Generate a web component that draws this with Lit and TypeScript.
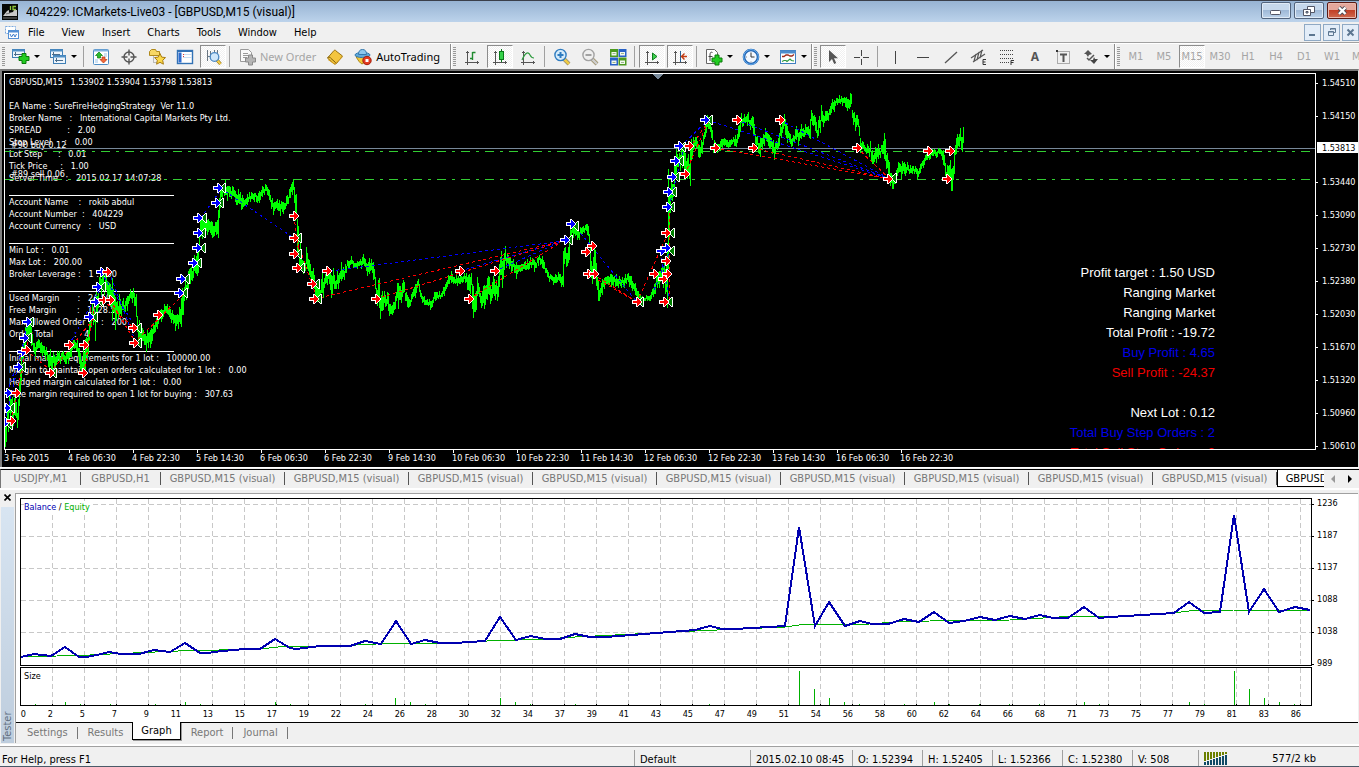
import { LitElement, html, svg, css } from "lit";
import { customElement, property } from "lit/decorators.js";

/* ---------- data ---------- */

// Turning points of the price series: bar, high, low (pixel rows, one bar per pixel).
const TURNS: number[][] = [
  [5, 424, 440], [7, 408, 428], [10, 395, 418], [13, 405, 425], [16, 395, 415], [17, 410, 428], [19, 380, 412], [20, 362, 395],
  [22, 344, 368], [24, 330, 352], [26, 322, 340], [28, 318, 334], [31, 330, 345], [34, 342, 354], [38, 340, 350], [42, 344, 354], [46, 348, 358],
  [50, 352, 370], [55, 354, 364], [60, 352, 362], [65, 353, 362], [70, 346, 355], [75, 339, 347], [78, 344, 360], [80, 350, 366],
  [82, 356, 372], [84, 345, 374], [86, 340, 362], [88, 326, 345], [90, 312, 330], [93, 306, 322], [95, 308, 336], [97, 290, 318],
  [99, 278, 296], [101, 272, 288], [104, 276, 292], [106, 268, 288], [108, 285, 300], [112, 270, 302], [115, 292, 316],
  [118, 300, 316], [122, 300, 314], [125, 302, 312], [128, 292, 302], [131, 291, 298], [133, 286, 302], [136, 298, 314],
  [138, 326, 346], [140, 328, 348], [145, 334, 346], [150, 330, 345], [155, 322, 334], [160, 310, 320], [165, 304, 312],
  [168, 306, 316], [172, 312, 324], [176, 314, 326], [180, 310, 324], [182, 288, 312], [185, 278, 300], [188, 273, 290],
  [191, 268, 285], [195, 260, 276], [197, 248, 268], [199, 232, 258], [201, 212, 240], [204, 214, 230], [208, 220, 233],
  [212, 222, 238], [216, 222, 236], [218, 212, 230], [219, 190, 215], [222, 184, 195], [226, 186, 198], [230, 186, 198],
  [235, 189, 200], [238, 192, 206], [242, 197, 207], [246, 196, 204], [250, 192, 200], [255, 192, 198], [258, 194, 202],
  [262, 189, 196], [265, 185, 192], [268, 188, 196], [270, 194, 202], [273, 200, 213], [276, 202, 212], [280, 202, 214],
  [284, 202, 210], [287, 196, 206], [290, 187, 198], [292, 178, 194], [294, 184, 200], [296, 190, 222], [298, 232, 268],
  [301, 254, 270], [304, 262, 271], [306, 250, 268], [310, 260, 275], [313, 272, 286], [316, 282, 298], [319, 288, 306],
  [322, 278, 292], [325, 273, 287], [328, 268, 280], [331, 272, 294], [335, 277, 288], [338, 270, 283], [343, 268, 282],
  [347, 260, 268], [351, 258, 265], [355, 263, 269], [360, 260, 266], [363, 256, 266], [367, 263, 272], [371, 256, 270],
  [374, 266, 277], [376, 278, 300], [380, 290, 312], [383, 290, 308], [387, 292, 304], [390, 302, 316], [393, 300, 312],
  [396, 290, 302], [398, 280, 298], [401, 284, 300], [403, 276, 290], [406, 296, 304], [410, 300, 307], [413, 286, 296],
  [418, 279, 288], [422, 296, 302], [427, 298, 304], [431, 301, 307], [434, 292, 300], [438, 292, 298], [441, 293, 298],
  [445, 284, 293], [450, 272, 280], [455, 277, 283], [460, 276, 283], [465, 273, 281], [468, 274, 290], [471, 274, 292],
  [473, 282, 316], [475, 288, 312], [478, 278, 295], [481, 296, 308], [484, 282, 300], [488, 280, 299], [492, 281, 298],
  [497, 280, 300], [499, 258, 286], [503, 252, 272], [505, 248, 264], [508, 257, 270], [511, 257, 268], [515, 262, 273],
  [520, 265, 272], [525, 264, 270], [530, 258, 266], [535, 262, 268], [539, 254, 262], [541, 256, 264], [545, 265, 271],
  [549, 274, 280], [554, 277, 282], [559, 273, 280], [562, 278, 286], [563, 242, 270], [566, 250, 265], [569, 240, 258],
  [571, 222, 240], [574, 224, 236], [578, 228, 240], [582, 225, 232], [586, 225, 232], [588, 226, 240], [590, 248, 266],
  [592, 262, 280], [594, 246, 274], [597, 270, 292], [599, 285, 299], [603, 279, 290], [608, 274, 282], [612, 273, 284],
  [618, 278, 288], [622, 276, 286], [627, 274, 282], [631, 277, 285], [635, 284, 292], [638, 292, 299], [641, 294, 300],
  [645, 296, 300], [650, 295, 300], [654, 284, 294], [657, 272, 286], [660, 272, 284], [663, 262, 284], [665, 258, 282],
  [667, 232, 306], [668, 180, 302], [669, 192, 240], [670, 186, 212], [672, 178, 200], [674, 168, 192], [676, 152, 180],
  [678, 148, 166], [680, 144, 168], [683, 146, 168], [686, 156, 174], [688, 162, 182], [690, 144, 176], [693, 138, 150],
  [697, 137, 148], [699, 144, 160], [702, 138, 150], [704, 128, 140], [707, 116, 128], [711, 124, 136], [713, 140, 150],
  [717, 144, 150], [722, 139, 147], [727, 141, 147], [732, 138, 144], [737, 136, 144], [739, 120, 138], [741, 115, 126],
  [747, 114, 122], [752, 120, 130], [755, 126, 142], [758, 138, 152], [761, 138, 150], [765, 130, 142], [769, 134, 146],
  [773, 142, 156], [776, 140, 152], [779, 130, 142], [783, 113, 128], [785, 118, 134], [788, 132, 142], [792, 138, 145],
  [796, 126, 136], [799, 132, 142], [803, 128, 140], [808, 124, 133], [810, 128, 142], [811, 110, 122], [814, 114, 126],
  [817, 126, 137], [821, 112, 126], [825, 113, 122], [830, 108, 116], [832, 98, 108], [837, 97, 103], [843, 98, 103],
  [848, 94, 110], [851, 93, 106], [853, 112, 128], [858, 119, 127], [860, 138, 148], [865, 146, 152], [870, 146, 156],
  [873, 152, 162], [877, 145, 156], [880, 147, 156], [884, 142, 156], [886, 150, 166], [888, 158, 176], [890, 168, 182],
  [893, 176, 187], [896, 170, 178], [899, 165, 173], [904, 162, 171], [909, 165, 172], [914, 166, 172], [918, 168, 176],
  [922, 160, 168], [926, 154, 161], [930, 149, 156], [936, 150, 156], [940, 147, 153], [943, 148, 160], [946, 166, 180],
  [949, 164, 180], [952, 168, 193], [954, 154, 172], [955, 140, 156], [957, 132, 146], [960, 130, 145], [964, 136, 152],
];

function barsPath(turns: number[][]): string {
  let seed = 7;
  const rnd = () => {
    seed = (seed * 1103515245 + 12345) % 2147483648;
    return seed / 2147483648;
  };
  let d = "";
  for (let i = 0; i < turns.length - 1; i++) {
    const [x0, h0, l0] = turns[i];
    const [x1, h1, l1] = turns[i + 1];
    for (let x = x0; x < x1; x++) {
      const t = (x - x0) / (x1 - x0);
      const hi = h0 + (h1 - h0) * t;
      const lo = l0 + (l1 - l0) * t;
      const range = lo - hi;
      const shift = (rnd() - 0.5) * range * 0.6;
      const shrink = rnd() * range * 0.25;
      const up = rnd() > 0.9 ? range * 0.4 : 0;
      const down = rnd() > 0.9 ? range * 0.4 : 0;
      d += `M${x + 0.5} ${Math.round(hi + shift + shrink - up)}V${Math.round(lo + shift - shrink + down + 1)}`;
    }
  }
  return d;
}

const BUYS = [
  [27, 322], [24, 338], [22, 352], [18, 367], [7, 393], [6, 408], [5, 422], [101, 272], [97, 287], [95, 302], [89, 317],
  [181, 279], [179, 293], [218, 188], [216, 203], [198, 218], [198, 233], [197, 248], [193, 263], [571, 224], [565, 240],
  [661, 251], [666, 248], [668, 192], [667, 207], [672, 177], [675, 161], [679, 146], [705, 120],
];
const SELLS = [
  [26, 350], [16, 393], [11, 421], [50, 373], [69, 345], [84, 345], [83, 373], [107, 272], [103, 300], [110, 300], [133, 328],
  [134, 343], [158, 315], [294, 216], [294, 238], [294, 254], [297, 268], [312, 284], [314, 299], [327, 271], [376, 299],
  [460, 271], [469, 299], [495, 271], [586, 252], [592, 246], [588, 274], [594, 274], [637, 302], [654, 274], [663, 279],
  [666, 261], [667, 274], [664, 302], [666, 233], [689, 146], [685, 174], [715, 148], [737, 120], [753, 148], [780, 120],
  [857, 148], [888, 179], [928, 151], [950, 151], [947, 179],
];
const EXITS = [
  [31, 322], [29, 338], [23, 367], [12, 408], [10, 425], [54, 373], [95, 317], [101, 302], [103, 287], [139, 328], [139, 343],
  [187, 279], [185, 293], [223, 188], [221, 203], [204, 218], [203, 233], [203, 248], [199, 263], [299, 238], [299, 254],
  [302, 268], [317, 284], [319, 299], [570, 240], [576, 226], [641, 302], [670, 302], [672, 251], [672, 233], [672, 207],
  [674, 192], [677, 177], [681, 161], [683, 147], [710, 120], [894, 178],
];
const BUY_LINKS = [
  [330, 271, 563, 241], [460, 271, 563, 241], [495, 271, 563, 241], [573, 224, 637, 302], [220, 188, 294, 238], [201, 218, 222, 188],
  [101, 272, 136, 328], [109, 272, 136, 343], [707, 120, 890, 179], [737, 120, 890, 179], [780, 120, 890, 179], [681, 146, 708, 120],
  [669, 207, 684, 147], [654, 290, 670, 251], [660, 252, 670, 302], [5, 422, 28, 322], [7, 393, 26, 338], [69, 345, 101, 287],
];
const SELL_LINKS = [
  [314, 299, 563, 241], [376, 299, 563, 241], [469, 299, 563, 241], [593, 274, 637, 302], [588, 274, 637, 302], [637, 302, 668, 233],
  [715, 148, 890, 179], [753, 148, 890, 179], [857, 148, 890, 179], [685, 174, 708, 122], [690, 148, 708, 122], [294, 216, 299, 254],
  [296, 238, 317, 299], [110, 300, 136, 343], [103, 300, 134, 328], [134, 343, 185, 293], [26, 350, 54, 373], [50, 373, 95, 317],
  [11, 421, 28, 340], [84, 373, 95, 302], [669, 207, 669, 302],
];

const PRICES = ["1.54510", "1.54150", "", "1.53440", "1.53090", "1.52730", "1.52380", "1.52030", "1.51670", "1.51320", "1.50960", "1.50610"];
const TIMES = [
  "3 Feb 2015", "4 Feb 06:30", "4 Feb 22:30", "5 Feb 14:30", "6 Feb 06:30", "6 Feb 22:30", "9 Feb 14:30", "10 Feb 06:30",
  "10 Feb 22:30", "11 Feb 14:30", "12 Feb 06:30", "12 Feb 22:30", "13 Feb 14:30", "16 Feb 06:30", "16 Feb 22:30",
];
const RULE = "---";
const COMMENT = [
  "EA Name : SureFireHedgingStrategy  Ver 11.0",
  "Broker Name   :   International Capital Markets Pty Ltd.",
  "SPREAD          :   2.00",
  "Stop Level     :   0.00",
  "Lot Step      :   0.01",
  "Tick Price     :   1.00",
  "Server Time   :   2015.02.17 14:07:28",
  RULE,
  "Account Name    :   rokib abdul",
  "Account Number  :   404229",
  "Account Currency   :   USD",
  RULE,
  "Min Lot :   0.01",
  "Max Lot :   200.00",
  "Broker Leverage :   1 : 500",
  RULE,
  "Used Margin       :   24.59",
  "Free Margin        :   1028.58",
  "Max Allowed Order      :   200",
  "Order Total        :   4",
  RULE,
  "Initial margin requirements for 1 lot :   100000.00",
  "Margin to maintain open orders calculated for 1 lot :   0.00",
  "Hedged margin calculated for 1 lot :   0.00",
  "Free margin required to open 1 lot for buying :   307.63",
];
const STATS: [string, string][] = [
  ["Profit target : 1.50 USD", ""], ["Ranging Market", ""], ["Ranging Market", ""], ["Total Profit : -19.72", ""],
  ["Buy Profit : 4.65", "buy"], ["Sell Profit : -24.37", "sell"], ["", ""], ["Next Lot : 0.12", ""],
  ["Total Buy Step Orders : 2", "buy"], ["Total Sell Step Orders : 2", "sell"],
];

const BALANCE =
  "21,657 34,654 51,656 65,647 79,657 86,657 97,655 109,652 121,654 139,654 154,650 170,652 185,643 200,653 207,653 222,651 245,649 260,649 275,639 290,648 296,649 320,646 350,646 365,641 381,644 396,621 411,644 425,640 440,643 455,643 485,641 500,617 516,640 531,636 545,639 560,639 575,634 590,637 606,637 695,630 710,626 722,629 735,629 785,626 799,527 815,626 829,602 845,626 860,621 872,624 888,624 904,619 919,622 934,612 949,623 964,621 980,617 995,620 1010,616 1025,619 1040,615 1053,618 1068,618 1084,607 1099,618 1110,617 1174,613 1189,602 1204,613 1220,612 1234,515 1249,612 1264,589 1279,612 1295,607 1310,610";
const EQUITY =
  "21,657 57,656 90,655 110,654 178,651 260,649 278,647 357,645 396,643 455,643 487,641 545,639 575,637 695,631 785,627 799,625 870,624 895,622 930,621 1010,620 1076,616 1099,617 1174,613 1189,611 1234,610 1310,610";
const SIZES = [
  [35, 1], [65, 3], [80, 1], [110, 1], [155, 1], [185, 3], [200, 1], [275, 3], [290, 1], [365, 1], [395, 7], [410, 3], [425, 1],
  [500, 7], [515, 3], [530, 1], [575, 1], [709, 1], [799, 34], [814, 16], [829, 7], [844, 3], [859, 1], [904, 1], [934, 3], [949, 1],
  [979, 1], [1009, 1], [1039, 1], [1084, 3], [1099, 1], [1189, 3], [1204, 1], [1234, 34], [1249, 16], [1264, 7], [1279, 3], [1294, 1],
];
const TRADE_NUMBERS = [
  2, 5, 7, 9, 11, 13, 15, 17, 19, 22, 24, 26, 28, 30, 32, 34, 37, 39, 41, 43, 45, 47, 49, 51, 54, 56, 58, 60, 62, 64, 66, 68, 71,
  73, 75, 77, 79, 81, 83, 86,
];

/* ---------- icons ---------- */

const AXES = svg`<path d="M4.5 3v14M2 14.5h14M3 4.5h3M14.5 13v3" stroke="#555" fill="none"/>`;
const PLUS = (x: number, y: number, fill = "#22cc22", edge = "#0a7a0a") => svg`
  <path d="M${x + 3} ${y}h4v3h3v4h-3v3h-4v-3h-3v-4h3z" fill=${fill} stroke=${edge}/>`;
const WINDOW = (x: number, y: number) => svg`
  <rect x=${x + 0.5} y=${y + 0.5} width="12" height="8" fill="#eef5fc" stroke="#3f7fb5"/>
  <path d="M${x} ${y + 1.5}h13" stroke="#4f8fc5" stroke-width="2"/>
  <path d="M${x + 3.5} ${y + 3}v4M${x + 2} ${y + 5.5}h8" stroke="#4a6d8c" fill="none"/>`;
const LENS = (ring: string, glass: string, handle: string, sign: string) => svg`
  <path d="M11 11l5 5" stroke="#6d5a20" stroke-width="4" opacity=".6"/>
  <path d="M11 11l5 5" stroke=${handle} stroke-width="2.4"/>
  <circle cx="7.5" cy="7" r="5.6" fill=${glass} stroke=${ring} stroke-width="1.4"/>
  <path d=${sign} stroke=${ring} stroke-width="2"/>`;

const ICONS: Record<string, unknown> = {
  logo: svg`<rect width="16" height="16" fill="#060806"/><path d="M1 12l4-5 2-1 0 3 4-1 1-2 3 0v6z" fill="#c9c9c9"/><path d="M4 10l4-1M1 14h14" stroke="#777"/><path d="M8.500 2v4M14 2.500h-3v3h3" stroke="#8fc63a" fill="none" stroke-width="1.300"/>`,
  mdi: svg`<rect x="1.500" y="2.500" width="10" height="7" fill="#fff" stroke="#7ba9de" stroke-dasharray="2 1"/><rect x="4.500" y="6.500" width="10" height="8" fill="#fff" stroke="#5590d4"/><path d="M4 7.500h11" stroke="#5590d4" stroke-width="2"/><path d="M6 10l1.500 3 2-3 1.500 3 1.500-3" stroke="#3c7ccc" fill="none"/>`,
  newchart: svg`${WINDOW(0, 1)}${PLUS(7, 5.5)}`,
  profiles: svg`${WINDOW(1, 1)}${WINDOW(4, 7)}`,
  market: svg`<rect x="1.500" y="1.500" width="15" height="15" rx="1" fill="#fff" stroke="#4d8cc4"/><path d="M2 2.500h14" stroke="#7fb0de" stroke-width="2"/><path d="M12 6h3M12 8h3M3 12h3M3 14h3" stroke="#9cc3e6"/><path d="M7 4l3.500 3.500H8.500V10h-3V7.500H3.500z" fill="#2dbb2d" stroke="#0b7d0b" stroke-width=".7"/><path d="M11.500 15L8 11.500h2V9h3v2.500h2z" fill="#f26b3a" stroke="#b83212" stroke-width=".7"/>`,
  crosshair: svg`<circle cx="9" cy="9" r="5" fill="none" stroke="#555" stroke-width="1.400"/><path d="M9 1.500v6M9 10.500v6M1.500 9h6M10.500 9h6" stroke="#555" stroke-width="1.400"/>`,
  navigator: svg`<path d="M1.500 3.500l2-2h4l1 2h3v4h-10z" fill="#f7d765" stroke="#b08a1c"/><path d="M5.500 8.500v6h3" stroke="#888" stroke-dasharray="1 1" fill="none"/><path d="M12 5.500l1.700 3.600 3.800.5-2.800 2.700.7 3.900-3.400-1.900-3.400 1.900.7-3.900-2.800-2.700 3.800-.5z" fill="#fbd84a" stroke="#a87c12"/>`,
  terminal: svg`<rect x="1.500" y="2.500" width="15" height="13" fill="#fff" stroke="#3272b5" stroke-width="1.400"/><path d="M2 3.500h14" stroke="#3272b5"/><rect x="2.500" y="4.500" width="3" height="10" fill="#2e6dd0"/><path d="M7 6.500h9M7 9.500h9" stroke="#c8ddf2"/><path d="M7 6.500h1M7 8.500h1" stroke="#d33"/>`,
  tester: svg`<path d="M3.500 2v11M6.500 3v8M10.500 2v4M13.500 2v5M3 8.500h5" stroke="#6b7782"/><path d="M13 12l3.500 4" stroke="#8a6a10" stroke-width="3.400"/><path d="M13 12l3.500 4" stroke="#f5cf4a" stroke-width="2"/><circle cx="10.500" cy="9" r="4.300" fill="#cfe6fa" stroke="#4b88c4" stroke-width="1.300"/>`,
  neworder: svg`<path d="M2.500 1.500h8l3 3v9h-11z" fill="#fafafa" stroke="#9a9a9a"/><path d="M5 5.500h5M5 7.500h6M5 9.500h4" stroke="#9a9a9a"/>${PLUS(7.5, 7, "#b5b5b5", "#8a8a8a")}`,
  editor: svg`<path d="M1.500 10L8 2.500c1-.8 2 0 2 .5l6.500 5-6 7.500c-1 .9-2 .6-3 0z" fill="#f3c540" stroke="#9a7413"/><path d="M1.500 10c1-1.500 2.500-1 3 0l5.500 5" fill="none" stroke="#7a5a0c"/><path d="M2 11.500l6.500 4.500 8-7" fill="none" stroke="#d7a021"/>`,
  auto: svg`<path d="M2 8.500c2 4 4 6.500 6 7.500 3-1.500 5-4 6-7.500z" fill="#f2c838" stroke="#a98517"/><ellipse cx="8.500" cy="7" rx="7.500" ry="2.600" fill="#5fa9da" stroke="#3478ad"/><path d="M4.500 6.500C4.500 3 6 1.500 8.500 1.500S12.500 3 12.500 6.500z" fill="#8cc6ec" stroke="#3478ad"/><circle cx="13" cy="12.500" r="4.200" fill="#e23a20" stroke="#a3200c"/><rect x="11.500" y="11" width="3" height="3" fill="#fff"/>`,
  bars: svg`${AXES}<path d="M9.500 4v8M9.500 4.500h3M7 10.500h2.500" stroke="#1f8a2f" stroke-width="1.400" fill="none"/>`,
  candles: svg`${AXES}<path d="M10.500 1v13" stroke="#0a7a1a"/><rect x="8.500" y="3.500" width="4" height="8" fill="#35d24a" stroke="#0a7a1a"/>`,
  line: svg`${AXES}<path d="M3 12c3-7 6-9 8-5 1 2 3 3 4 3" stroke="#2f9b3f" fill="none" stroke-width="1.200"/>`,
  zoomin: LENS("#2f7cc0", "#d5ebfa", "#f2cd42", "M4.500 7h6M7.500 4v6"),
  zoomout: LENS("#a2a2a2", "#efefef", "#cfcfcf", "M4.500 7h6"),
  tile: svg`<rect x="1" y="1" width="8" height="8" fill="#4c9a20"/><rect x="9.500" y="1" width="8" height="8" fill="#2862c6"/><rect x="1" y="9.500" width="8" height="8" fill="#2862c6"/><rect x="9.500" y="9.500" width="8" height="8" fill="#4c9a20"/><path d="M2.500 4h5v3.500h-5zM11 4h5v3.500h-5zM2.500 12.500h5V16h-5zM11 12.500h5V16h-5z" fill="#f3f8ef"/><path d="M3.500 5.500h3M12 5.500h3M3.500 14.500h3M12 14.500h3" stroke="#9bb88c"/>`,
  scroll: svg`${AXES}<path d="M9.500 5l4.500 3.500L9.500 12z" fill="#3fd04f" stroke="#0b7d1b"/>`,
  shift: svg`${AXES}<path d="M9.500 3v11" stroke="#2a5f93"/><path d="M16 8.500h-5M13.500 5.500l-3 3 3 3" stroke="#c23b12" stroke-width="1.400" fill="none"/>`,
  indicators: svg`<path d="M1.500 1.500h8l3 3v11h-11z" fill="#fff" stroke="#666"/><path d="M7.500 4.500C5.500 3.500 5 5 5 7v6M3.500 8.500h4" stroke="#444" fill="none"/>${PLUS(7, 7)}`,
  clock: svg`<circle cx="9" cy="9" r="7" fill="#f2f8ff" stroke="#1d62b2" stroke-width="2.600"/><circle cx="9" cy="9" r="7.400" fill="none" stroke="#6db1ef"/><path d="M9 4.500V9h3.500" stroke="#333" fill="none"/><path d="M9 13.500v1M4 9h1" stroke="#888"/>`,
  template: svg`<rect x="1.500" y="2.500" width="15" height="13" fill="#fff" stroke="#3f7fc0"/><path d="M1 4h16" stroke="#4c8ccc" stroke-width="3"/><path d="M3 8.500h2l2-1.500h2l2 1h2l2-1.500" stroke="#a02a1a" fill="none" stroke-width="1.300"/><path d="M3 13.500l2-1h2l1 1 3-2.500 1.500 1.500 2.500.5" stroke="#2f9b3f" fill="none" stroke-width="1.200"/>`,
  cursor: svg`<path d="M5 2v12l3-3 2.200 5 2-1-2.200-4.700h4z" fill="#555"/>`,
  cross: svg`<path d="M9.500 2v6M9.500 11v6M2 9.500h6M11 9.500h6" stroke="#444"/>`,
  vline: svg`<path d="M9.500 3v13" stroke="#444"/>`,
  hline: svg`<path d="M3 9.500h12" stroke="#444"/>`,
  trend: svg`<path d="M3 15L15 4" stroke="#555" stroke-width="1.300"/>`,
  channel: svg`<path d="M1 10L13 2M3 14l12-8M6 6l-2 7M9 4L7 12M12 2l-2 8" stroke="#555" fill="none" stroke-width="1.200"/><path d="M16 11.500h-3v5h3M13 14h2.500" stroke="#333" fill="none"/>`,
  fibo: svg`<path d="M2 2.500h13M2 6.500h13M2 10.500h13M2 14.500h9" stroke="#444" stroke-dasharray="1 1"/><path d="M16 12.500h-3V17M13 14.500h2.500" stroke="#333" fill="none"/>`,
  label: svg`<rect x="3.500" y="3.500" width="12" height="12" fill="none" stroke="#666" stroke-dasharray="1 1"/><path d="M6 6.500h7M9.500 6.500V14" stroke="#555" stroke-width="2"/><rect x="2" y="2" width="2" height="2" fill="#333"/>`,
  arrows: svg`<path d="M6 2l4 4-3 1-1 2-2-3-2 0z" fill="#555"/><path d="M5 10l2 2 5-5" stroke="#555" stroke-width="1.500" fill="none"/><path d="M12 9l1 2 3 0-4 5-4-4h3z" fill="#444"/>`,
};

@customElement("mt-icon")
class MtIcon extends LitElement {
  @property() name = "";
  static styles = css`
    :host { display: inline-flex; flex: none; }
    svg { display: block; width: 18px; height: 18px; }
    .small { width: 16px; height: 16px; }
  `;
  render() {
    const small = this.name === "logo" || this.name === "mdi";
    return html`<svg class=${small ? "small" : ""} viewBox=${small ? "0 0 16 16" : "0 0 18 18"} aria-hidden="true">${ICONS[this.name]}</svg>`;
  }
}

/* ---------- title bar and menu ---------- */

@customElement("mt-header")
class MtHeader extends LitElement {
  static styles = css`
    :host { display: block; color: #000; }
    button { font: inherit; color: inherit; padding: 0; margin: 0; border: 0; background: none; }
    .title {
      display: flex; align-items: center; height: 21px; border-top: 1px solid #3a3f4a; padding: 0 2px;
      background: linear-gradient(#97b3d3, #bcd3eb); font: 12px Roboto, "Open Sans", sans-serif;
    }
    .title h1 { flex: 1; margin: 0 0 0 8px; font: inherit; white-space: nowrap; overflow: hidden; }
    .win { display: flex; gap: 3px; align-self: flex-start; padding-top: 1px; }
    .win button {
      width: 30px; height: 17px; border: 1px solid #52647d; border-radius: 2px; display: grid; place-items: center;
      background: linear-gradient(#c6d8ec 45%, #9fb9d7 50%, #bcd2ea); box-shadow: inset 0 0 0 1px #dfeaf6;
    }
    .win .close { border-color: #5a1a14; background: linear-gradient(#e5a79c 45%, #c23f26 50%, #cf6a50); box-shadow: inset 0 0 0 1px #eab9ae; }
    .menu {
      display: flex; align-items: center; height: 20px; padding-left: 4px; background: #f0f0f0;
      font: 11px "DejaVu Sans Condensed", "DejaVu Sans", sans-serif;
    }
    nav { display: flex; flex: 1; gap: 17px; margin-left: 8px; }
    .child { display: flex; gap: 2px; }
    .child button { width: 17px; height: 17px; border: 1px solid #8fa9c4; background: #e3edf8; display: grid; place-items: center; }
    svg { display: block; }
  `;
  render() {
    return html`
      <div class="title">
        <mt-icon name="logo"></mt-icon>
        <h1>404229: ICMarkets-Live03 - [GBPUSD,M15 (visual)]</h1>
        <div class="win">
          <button aria-label="Minimize"><svg width="12" height="12"><rect x=".5" y="5.500" width="10" height="4" rx="1" fill="#fff" stroke="#535666"/></svg></button>
          <button aria-label="Restore"><svg width="14" height="12"><path d="M5.500 1.500h7v6h-7z" fill="#fff" stroke="#535666"/><path d="M1.500 4.500h7v6h-7z" fill="#fff" stroke="#535666"/><path d="M4 6.500h2v1.500h-2z" fill="#9fb9d7" stroke="#535666"/></svg></button>
          <button class="close" aria-label="Close"><svg width="13" height="11"><path d="M3 2.500l6.500 6.500M9.500 2.500L3 9" stroke="#4a4a55" stroke-width="4"/><path d="M3 2.500l6.500 6.500M9.500 2.500L3 9" stroke="#fff" stroke-width="2.400"/></svg></button>
        </div>
      </div>
      <div class="menu">
        <mt-icon name="mdi"></mt-icon>
        <nav aria-label="Main menu">
          ${["File", "View", "Insert", "Charts", "Tools", "Window", "Help"].map((m) => html`<button>${m}</button>`)}
        </nav>
        <div class="child">
          <button aria-label="Minimize chart"><svg width="9" height="9"><path d="M1 7h6" stroke="#5c7690" stroke-width="2"/></svg></button>
          <button aria-label="Restore chart"><svg width="10" height="10"><path d="M3.500 3V1.500h5v4H7M3.500 2h5" fill="none" stroke="#5c7690"/><path d="M1.500 4.500h5v4h-5zM1.500 5h5" fill="none" stroke="#5c7690"/></svg></button>
          <button aria-label="Close chart"><svg width="9" height="9"><path d="M1.500 1.500l6 6M7.500 1.500l-6 6" stroke="#5c7690" stroke-width="2"/></svg></button>
        </div>
      </div>`;
  }
}

/* ---------- toolbar ---------- */

type Tool = { icon?: string; text?: string; label: string; drop?: boolean; on?: boolean; off?: boolean } | null;
const t = (icon: string, label: string, more: object = {}): Tool => ({ icon, label, ...more });
const frame = (text: string, on = false): Tool => ({ text, label: text, on, off: true });
const GROUPS: Tool[][] = [
  [
    t("newchart", "New chart", { drop: true }), t("profiles", "Profiles", { drop: true }), null, t("market", "Market Watch"),
    t("crosshair", "Data Window"), t("navigator", "Navigator"), t("terminal", "Terminal"), t("tester", "Strategy Tester", { on: true }), null,
    t("neworder", "New Order", { text: "New Order", off: true }), t("editor", "MetaEditor"), t("auto", "AutoTrading", { text: "AutoTrading" }),
  ],
  [
    t("bars", "Bar chart"), t("candles", "Candlesticks", { on: true }), t("line", "Line chart"), null, t("zoomin", "Zoom in"),
    t("zoomout", "Zoom out"), t("tile", "Tile windows"), null, t("scroll", "Auto scroll", { on: true }), t("shift", "Chart shift", { on: true }),
    null, t("indicators", "Indicators", { drop: true }), t("clock", "Periods", { drop: true }), t("template", "Templates", { drop: true }),
  ],
  [
    t("cursor", "Cursor", { on: true }), t("cross", "Crosshair"), null, t("vline", "Vertical line"), t("hline", "Horizontal line"),
    t("trend", "Trendline"), t("channel", "Equidistant channel"), t("fibo", "Fibonacci retracement"), { text: "A", label: "Text" },
    t("label", "Text label"), t("arrows", "Arrows", { drop: true }),
  ],
  [frame("M1"), frame("M5"), frame("M15", true), frame("M30"), frame("H1"), frame("H4"), frame("D1"), frame("W1"), frame("MN")],
];

@customElement("mt-toolbar")
class MtToolbar extends LitElement {
  static styles = css`
    :host {
      display: flex; height: 25px; border-top: 1px solid #a0a0a0; box-shadow: inset 0 1px #fff; padding-top: 1px; overflow: hidden;
      background: #f0f0f0; font: 11px "Noto Sans", "Open Sans", sans-serif;
    }
    .group { display: flex; flex: none; align-items: center; border-right: 1px solid #8c8c8c; box-shadow: 1px 0 #fff; }
    .group:first-child { min-width: 450px; }
    .group:last-child { font: 11px "DejaVu Sans Condensed", "DejaVu Sans", sans-serif; }
    .grip { width: 3px; height: 19px; margin: 0 2px; background: repeating-linear-gradient(#999 0 1px, #f0f0f0 1px 2px); }
    .sep { width: 1px; height: 21px; margin: 0 3px 0 2px; background: #a0a0a0; }
    button {
      display: flex; flex: none; align-items: center; justify-content: center; width: 26px; height: 23px; margin: 0 1px; padding: 0;
      border: 1px solid transparent; background: none; color: #000; font: inherit; white-space: nowrap;
    }
    .text { width: auto; gap: 4px; padding: 0 3px; }
    .drop { width: 35px; gap: 4px; }
    .on {
      border-color: #8c8c8c #fff #fff #8c8c8c;
      background: repeating-conic-gradient(#fff 0 25%, #f0f0f0 0 50%) 0 0 / 2px 2px;
    }
    .off { color: #a5a5a5; }
    .letter { font-weight: 700; color: #555; font-size: 12px; }
    .caret { border: 3px solid transparent; border-top-color: #000; border-bottom: 0; }
  `;
  private tool(x: Tool) {
    if (!x) return html`<span class="sep"></span>`;
    const cls = [x.icon && x.text ? "text" : "", x.drop ? "drop" : "", x.on ? "on" : "", x.off ? "off" : "", x.text === "A" ? "letter" : ""].join(" ");
    return html`<button class=${cls} aria-label=${x.label}>${x.icon ? html`<mt-icon name=${x.icon}></mt-icon>` : ""}${x.text ?? ""}${
      x.drop ? html`<span class="caret"></span>` : ""}</button>`;
  }
  render() {
    return GROUPS.map((g) => html`<div class="group"><span class="grip"></span>${g.map((x) => this.tool(x))}</div>`);
  }
}

/* ---------- price chart ---------- */

const link = (l: number[], color: string) =>
  svg`<path d="M${l[0]} ${l[1]}L${l[2]} ${l[3]}" stroke=${color} stroke-dasharray="3 3" fill="none"/>`;
const entry = (p: number[], color: string) =>
  svg`<path transform="translate(${p[0]} ${p[1]})" d="M-4.500-1.500H-.5V-4.500H.5L4.500-.5V.5L.5 4.500H-.5V1.500H-4.500Z" fill=${color} stroke="#fff"/>`;

@customElement("mt-chart")
class MtChart extends LitElement {
  static styles = css`
    :host {
      display: grid; grid-template: 1fr 17px / 1fr 42px; background: #000; color: #fff; padding: 2px 0 0 2px; overflow: hidden;
      border-style: solid; border-width: 2px 1px 0 2px; border-color: #777 #e3e3e3 #777 #808080; box-sizing: border-box;
      font: 9px/12px "DejaVu Sans Condensed", "DejaVu Sans", sans-serif;
    }
    .plot { position: relative; border: 1px solid #fff; overflow: hidden; min-width: 0; }
    .plot svg { position: absolute; inset: 0; width: 100%; height: 100%; }
    .info { padding: 2px 4px; }
    .info h2 { margin: 0 0 12px; font: inherit; white-space: pre; }
    .info p { margin: 0; height: 12px; white-space: pre; }
    .info .rule { width: 165px; height: 11px; border-bottom: 1px solid #fff; }
    .order { position: absolute; left: 6px; }
    .order.first { top: 65px; }
    .order.second { top: 94px; }
    .stats { position: absolute; right: 100px; top: 189px; font: 13px/20px "Liberation Sans", Arial, sans-serif; text-align: right; }
    .stats p { margin: 0; height: 20px; }
    .buy { color: #0000e8; }
    .sell { color: #f00000; }
    .prices { position: relative; grid-row: 1 / 3; grid-column: 2; display: flex; flex-direction: column; gap: 21px; padding-top: 4px; overflow: hidden; }
    .prices span { display: flex; align-items: center; height: 12px; }
    .prices span:not(:empty)::before { content: ""; width: 2px; height: 1px; background: #fff; margin-right: 4px; }
    .prices .now { position: absolute; left: 1px; right: 0; top: 69px; height: 11px; padding-left: 5px; background: #fff; color: #000; }
    .prices .now::before { display: none; }
    .times { display: flex; overflow: hidden; }
    .times span { flex: none; width: 64px; white-space: nowrap; line-height: 11px; }
    .times span::before { content: ""; display: block; width: 1px; height: 3px; margin-left: 1px; background: #fff; }
  `;
  render() {
    return html`
      <section class="plot">
        <div class="info">
          <h2>GBPUSD,M15   1.53902 1.53904 1.53798 1.53813</h2>
          ${COMMENT.map((c) => (c === RULE ? html`<p class="rule"></p>` : html`<p>${c}</p>`))}
        </div>
        <span class="order first">#90 buy 0.12</span>
        <span class="order second">#89 sell 0.06</span>
        <svg role="img" aria-label="GBPUSD price chart">
          <g transform="translate(-5 -74)" shape-rendering="crispEdges">
            <path d="M652 74h11l-5 5h-1z" fill="#778899"/>
            <line x1="5" x2="110%" y1="148.500" y2="148.500" stroke="#778899"/>
            <line x1="5" x2="110%" y1="151.500" y2="151.500" stroke="#32cd32" stroke-dasharray="9 6 3 6"/>
            <line x1="5" x2="110%" y1="179.500" y2="179.500" stroke="#32cd32" stroke-dasharray="9 6 3 6"/>
            <path d=${barsPath(TURNS)} stroke="#0f0" fill="none"/>
            ${BUY_LINKS.map((l) => link(l, "#00f"))}${SELL_LINKS.map((l) => link(l, "#f00"))}
            ${EXITS.map((p) => svg`<path transform="translate(${p[0]} ${p[1]})" d="M2.500-4.500V4.500H1.500L-2.500.5V-.5L1.500-4.500Z" fill="#008000" stroke="#fff"/>`)}
            ${BUYS.map((p) => entry(p, "#00f"))}${SELLS.map((p) => entry(p, "#f00"))}
          </g>
        </svg>
        <div class="stats">${STATS.map(([s, c]) => html`<p class=${c}>${s}</p>`)}</div>
      </section>
      <div class="prices">${PRICES.map((p) => html`<span>${p}</span>`)}<span class="now">1.53813</span></div>
      <div class="times">${TIMES.map((x) => html`<span>${x}</span>`)}</div>`;
  }
}

/* ---------- chart tabs ---------- */

@customElement("mt-chart-tabs")
class MtChartTabs extends LitElement {
  static styles = css`
    :host {
      display: flex; height: 23px; box-sizing: border-box; background: #f0f0f0; border-top: 1px solid #fff; padding-top: 1px; overflow: hidden;
      font: 11px "DejaVu Sans Condensed", "DejaVu Sans", sans-serif; border-bottom: 2px solid #fff;
    }
    .strip { display: flex; flex: 1; min-width: 0; overflow: hidden; border-top: 1px solid #000; border-left: 1px solid #777; }
    button { font: inherit; border: 0; background: none; padding: 0; color: #777; white-space: nowrap; }
    .tab { flex: none; width: 124px; height: 17px; display: flex; align-items: center; justify-content: center; }
    .tab::after { content: ""; width: 1px; height: 13px; background: #555; margin-left: auto; }
    .tab::before { content: ""; margin-right: auto; }
    .short { width: 80px; }
    .on { color: #000; background: #fff; border: 1px solid #000; border-top: 0; }
    .arrows { display: flex; width: 35px; border-top: 1px solid #000; }
    .arrows button { flex: 1; height: 17px; display: grid; place-items: center; }
    .arrows span { border: 4px solid transparent; }
    .arrows .prev { border-right-color: #999; border-left: 0; }
    .arrows .next { border-left-color: #000; border-right: 0; }
  `;
  render() {
    const tabs = ["USDJPY,M1", "GBPUSD,H1", ...Array(9).fill("GBPUSD,M15 (visual)")];
    return html`
      <div class="strip" role="tablist">
        ${tabs.map((x, i) => html`<button role="tab" class="tab ${i < 2 ? "short" : ""}">${x}</button>`)}
        <button role="tab" aria-selected="true" class="tab on">GBPUSD,M15 (visual)</button>
      </div>
      <div class="arrows">
        <button aria-label="Scroll left"><span class="prev"></span></button>
        <button aria-label="Scroll right"><span class="next"></span></button>
      </div>`;
  }
}

/* ---------- strategy tester ---------- */

@customElement("mt-tester")
class MtTester extends LitElement {
  static styles = css`
    :host { display: flex; background: #f0f0f0; padding: 3px 1px 1px 1px; font: 11px "DejaVu Sans Condensed", "DejaVu Sans", sans-serif; border-bottom: 2px solid #fff; }
    button { font: inherit; border: 0; background: none; padding: 0; color: #777; }
    .side { display: flex; flex-direction: column; width: 13px; margin-right: 1px; }
    .close { height: 9px; display: grid; place-items: center; margin-bottom: 5px; }
    .name {
      flex: 1; writing-mode: vertical-rl; transform: rotate(180deg); background: linear-gradient(#becddd, #d8e5f2); color: #5f6f80;
      line-height: 13px; padding-top: 2px;
    }
    .body { flex: 1; min-width: 0; display: flex; flex-direction: column; border: 1px solid #a0a0a0; border-right: 0; border-bottom: 0; }
    .graph { display: grid; grid-template-columns: 1fr 46px; background: #fff; padding: 4px 0 0 4px; border-bottom: 1px solid #000; font-size: 9px; color: #000; }
    .plot { position: relative; height: 208px; overflow: hidden; }
    .plot svg { position: absolute; inset: 0; width: 100%; height: 100%; }
    .plot span { position: absolute; left: 4px; line-height: 12px; background: #fff; }
    .legend { top: 3px; }
    .legend i { font-style: normal; }
    .balance { color: #0000b0; }
    .equity { color: #00b000; }
    .size { top: 172px; }
    .values { display: flex; flex-direction: column; gap: 20px; }
    .values span { height: 12px; line-height: 11px; display: flex; align-items: flex-start; }
    .values span::before { content: ""; width: 2px; height: 1px; background: #000; margin: 6px 3px 0 0; }
    .numbers { display: flex; height: 16px; overflow: hidden; grid-column: 1 / 3; }
    .numbers span { flex: none; width: 32px; line-height: 16px; text-align: right; }
    .numbers .zero { width: 6px; }
    .numbers .zero + span { width: 27px; }
    .tabs { display: flex; height: 20px; padding-left: 1px; }
    .tab { height: 19px; display: flex; align-items: center; padding-left: 10px; }
    .tab::after { content: ""; width: 1px; height: 12px; background: #777; margin-left: 9px; }
    .tab.on { background: #fff; color: #000; border: 1px solid #000; border-top: 0; margin: -1px 0 0 -1px; padding: 0 8px; box-shadow: 1px 1px #999; height: 18px; }
    .tab.before::after { background: none; }
    .tab.on::after { display: none; }
  `;
  render() {
    const columns = TRADE_NUMBERS.map((_, i) => 52.5 + i * 32);
    const tabs = ["Settings", "Results", "Graph", "Report", "Journal"];
    return html`
      <div class="side">
        <button class="close" aria-label="Close tester"><svg width="7" height="7"><path d="M.5 .5l6 6M6.500 .5l-6 6" stroke="#000" stroke-width="1.600"/></svg></button>
        <span class="name">Tester</span>
      </div>
      <div class="body">
        <div class="graph">
          <div class="plot">
            <svg role="img" aria-label="Balance and equity">
              <g transform="translate(-20 -498)" shape-rendering="crispEdges">
                ${columns.map((x) => svg`<path d="M${x} 499V665M${x} 668V706" stroke="#c8c8c8" stroke-dasharray="5 3"/><path d="M${x} 704v3" stroke="#000"/>`)}
                ${[504.5, 536.5, 568.5, 600.5, 632.5].map((y) => svg`<line x1="21" x2="110%" y1=${y} y2=${y} stroke="#c8c8c8" stroke-dasharray="5 3"/>`)}
                <polyline points=${EQUITY} fill="none" stroke="#00b000"/>
                <polyline points=${BALANCE} fill="none" stroke="#0000b0" stroke-width="2"/>
                ${SIZES.map(([x, h]) => svg`<rect x=${x} y=${705 - h} width="1" height=${h} fill="#00b000"/>`)}
              </g>
              <path d="M.5 168V.5H3000M.5 208V169.500H3000M0 167.500H3000M0 207.500H3000" fill="none" stroke="#000" shape-rendering="crispEdges"/>
              <line x1="100%" x2="100%" y1="0" y2="168" stroke="#000" stroke-width="2" shape-rendering="crispEdges"/>
              <line x1="100%" x2="100%" y1="169" y2="208" stroke="#000" stroke-width="2" shape-rendering="crispEdges"/>
            </svg>
            <span class="legend"><i class="balance">Balance</i> / <i class="equity">Equity</i></span>
            <span class="size">Size</span>
          </div>
          <div class="values">${[1236, 1187, 1137, 1088, 1038, 989].map((v) => html`<span>${v}</span>`)}</div>
          <div class="numbers"><span class="zero">0</span>${TRADE_NUMBERS.map((n) => html`<span>${n}</span>`)}</div>
        </div>
        <div class="tabs" role="tablist">
          ${tabs.map((x) => html`<button role="tab" class="tab ${x === "Graph" ? "on" : x === "Results" ? "before" : ""}">${x}</button>`)}
        </div>
      </div>`;
  }
}

/* ---------- status bar ---------- */

@customElement("mt-status")
class MtStatus extends LitElement {
  static styles = css`
    :host {
      display: flex; height: 21px; box-sizing: border-box; align-items: stretch; padding-top: 3px; background: #f0f0f0; color: #000;
      border-top: 1px solid #a0a0a0; border-bottom: 1px solid #4a5a68; font: 11px/19px "DejaVu Sans Condensed", "DejaVu Sans", sans-serif;
    }
    span { padding-left: 5px; border-left: 1px solid #a0a0a0; box-sizing: border-box; white-space: nowrap; }
    .help { flex: 1; border: 0; padding-left: 2px; }
    .profile { width: 116px; }
    .date { width: 102px; }
    .price { width: 70px; }
    .volume { width: 66px; }
    .net { display: flex; align-items: center; justify-content: space-between; width: 161px; padding-right: 43px; }
  `;
  render() {
    return html`
      <span class="help">For Help, press F1</span>
      <span class="profile">Default</span>
      <span class="date">2015.02.10 08:45</span>
      ${["O: 1.52394", "H: 1.52405", "L: 1.52366", "C: 1.52380"].map((x) => html`<span class="price">${x}</span>`)}
      <span class="volume">V: 508</span>
      <span class="net">
        <svg width="24" height="13" shape-rendering="crispEdges" role="img" aria-label="Connection">
          ${[0, 1, 2, 3, 4, 5, 6, 7].map((i) => svg`<rect x=${i * 3} width="2" height=${9 - i} fill="#6b8000"/><rect x=${i * 3} y=${10 - i} width="2" height=${3 + i} fill="#0f4a66"/>`)}
        </svg>577/2 kb
      </span>`;
  }
}

@customElement("app-root")
class AppRoot extends LitElement {
  static styles = css`
    :host { display: flex; flex-direction: column; height: 100vh; min-height: 600px; background: #f0f0f0; overflow: hidden; }
    mt-header, mt-toolbar, mt-chart-tabs, mt-tester, mt-status { flex: none; }
    mt-chart { flex: 1; min-height: 0; }
  `;
  render() {
    return html`
      <mt-header></mt-header>
      <mt-toolbar></mt-toolbar>
      <mt-chart></mt-chart>
      <mt-chart-tabs></mt-chart-tabs>
      <mt-tester></mt-tester>
      <mt-status></mt-status>`;
  }
}
